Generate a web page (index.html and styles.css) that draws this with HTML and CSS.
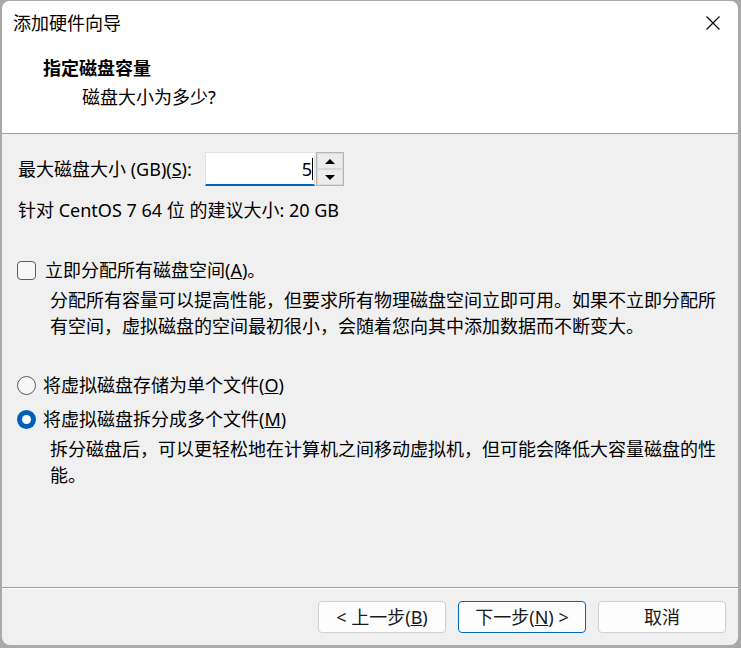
FILE: index.html
```html
<!DOCTYPE html>
<html lang="zh-CN">
<head>
<meta charset="utf-8">
<title>添加硬件向导</title>
<link rel="stylesheet" href="styles.css">
</head>
<body>
<div class="window">
  <div class="titlebar">
    <span class="title">添加硬件向导</span>
    <svg class="close" width="16" height="16" viewBox="0 0 16 16"><path d="M1.5 1.5 L14.5 14.5 M14.5 1.5 L1.5 14.5" stroke="#111" stroke-width="1.3" fill="none"/></svg>
  </div>
  <div class="header">
    <div class="h-title">指定磁盘容量</div>
    <div class="h-sub">磁盘大小为多少?</div>
  </div>
  <div class="content">
    <div class="size-row">
      <span class="size-label">最大磁盘大小 (GB)(<u>S</u>):</span>
      <div class="spin">
        <div class="spin-input"><span class="val">5</span><span class="caret"></span></div>
        <div class="spin-btns">
          <div class="spin-btn"><span class="tri up"></span></div>
          <div class="spin-btn"><span class="tri down"></span></div>
        </div>
      </div>
    </div>
    <div class="hint">针对 CentOS 7 64 位 的建议大小: 20 GB</div>
    <div class="check-row"><span class="checkbox"></span><span>立即分配所有磁盘空间(<u>A</u>)。</span></div>
    <p class="desc">分配所有容量可以提高性能，但要求所有物理磁盘空间立即可用。如果不立即分配所<br>有空间，虚拟磁盘的空间最初很小，会随着您向其中添加数据而不断变大。</p>
    <div class="radio-row first"><span class="radio"></span><span>将虚拟磁盘存储为单个文件(<u>O</u>)</span></div>
    <div class="radio-row second"><span class="radio checked"></span><span>将虚拟磁盘拆分成多个文件(<u>M</u>)</span></div>
    <p class="desc">拆分磁盘后，可以更轻松地在计算机之间移动虚拟机，但可能会降低大容量磁盘的性<br>能。</p>
  </div>
  <div class="footer">
    <button class="btn">&lt; 上一步(<u>B</u>)</button>
    <button class="btn primary">下一步(<u>N</u>) &gt;</button>
    <button class="btn">取消</button>
  </div>
</div>
</body>
</html>
```
FILE: styles.css
```css
html, body {
  margin: 0;
  padding: 0;
}
body {
  background: #a9a9a9;
  width: 741px;
  height: 648px;
  overflow: hidden;
  font-family: "Segoe UI", "Noto Sans", "Noto Sans CJK SC", sans-serif;
  font-size: 18px;
  color: #000;
}
.window {
  position: relative;
  margin: 1px 0 0 2px;
  width: 736px;
  height: 644px;
  border-radius: 8px;
  background: #f0f0f0;
  overflow: hidden;
  display: flex;
  flex-direction: column;
}
.titlebar {
  background: #fff;
  height: 43px;
  display: flex;
  align-items: center;
  justify-content: space-between;
  padding: 0 17px 0 11px;
}
.title {
  font-size: 18px;
  line-height: 26px;
}
.close {
  display: block;
}
.header {
  background: #fff;
  height: 90px;
  box-sizing: border-box;
  padding-top: 11px;
  border-bottom: 1px solid #a0a0a0;
}
.h-title {
  font-weight: bold;
  line-height: 26px;
  padding-left: 41px;
}
.h-sub {
  line-height: 26px;
  margin-top: 3px;
  padding-left: 80px;
}
.content {
  flex: 1;
  padding: 18px 8px 0 16px;
  white-space: nowrap;
}
.size-row {
  display: flex;
  align-items: center;
  height: 34px;
}
.size-label {
  line-height: 26px;
  width: 187px;
}
.spin {
  display: flex;
  height: 34px;
}
.spin-input {
  width: 110px;
  box-sizing: border-box;
  background: #fff;
  border: 1px solid #e3e3e3;
  border-bottom: 2px solid #0067c0;
  display: flex;
  align-items: center;
  justify-content: flex-end;
  padding-right: 1px;
}
.val {
  line-height: 26px;
}
.caret {
  width: 1px;
  height: 22px;
  background: #000;
}
.spin-btns {
  width: 28px;
  margin-left: 1px;
  box-sizing: border-box;
  border: 1px solid #b5b5b5;
  display: flex;
  flex-direction: column;
  background: #f0f0f0;
}
.spin-btn {
  flex: 1;
  border: 1px solid #dadada;
  background: #ececec;
  display: flex;
  align-items: center;
  justify-content: center;
}
.tri {
  width: 0;
  height: 0;
  border-left: 5px solid transparent;
  border-right: 5px solid transparent;
}
.tri.up {
  border-bottom: 5px solid #000;
}
.tri.down {
  border-top: 5px solid #000;
}
.hint {
  line-height: 26px;
  margin-top: 11px;
}
.check-row, .radio-row {
  display: flex;
  align-items: center;
  line-height: 26px;
}
.check-row {
  margin-top: 34px;
}
.checkbox {
  width: 19px;
  height: 19px;
  box-sizing: border-box;
  border: 1px solid #5c5c5c;
  border-radius: 4px;
  background: #f7f7f7;
  margin: 0 9px 0 -1px;
}
.desc {
  margin: 4px 0 0 32px;
  line-height: 26px;
}
.radio-row.first {
  margin-top: 33px;
}
.radio-row.second {
  margin-top: 8px;
}
.radio {
  width: 19px;
  height: 19px;
  box-sizing: border-box;
  border: 1px solid #5c5c5c;
  border-radius: 50%;
  background: #f7f7f7;
  margin: 0 7px 0 -1px;
  position: relative;
}
.radio.checked {
  border: none;
  background: #005fb8;
}
.radio.checked::after {
  content: "";
  position: absolute;
  left: 5px;
  top: 5px;
  width: 9px;
  height: 9px;
  border-radius: 50%;
  background: #fff;
}
.footer {
  height: 58px;
  box-sizing: border-box;
  border-top: 1px solid #a0a0a0;
  box-shadow: inset 0 1px 0 #fff;
  display: flex;
  justify-content: flex-end;
  align-items: flex-start;
  gap: 12px;
  padding: 13px 12px 0 0;
}
.btn {
  width: 128px;
  height: 32px;
  box-sizing: border-box;
  border: 1px solid #d0d0d0;
  border-radius: 4px;
  background: #fdfdfd;
  font-family: inherit;
  font-size: 18px;
  color: #1a1a1a;
  padding: 0;
  line-height: 26px;
}
.btn.primary {
  border-color: #0067c0;
}
```
